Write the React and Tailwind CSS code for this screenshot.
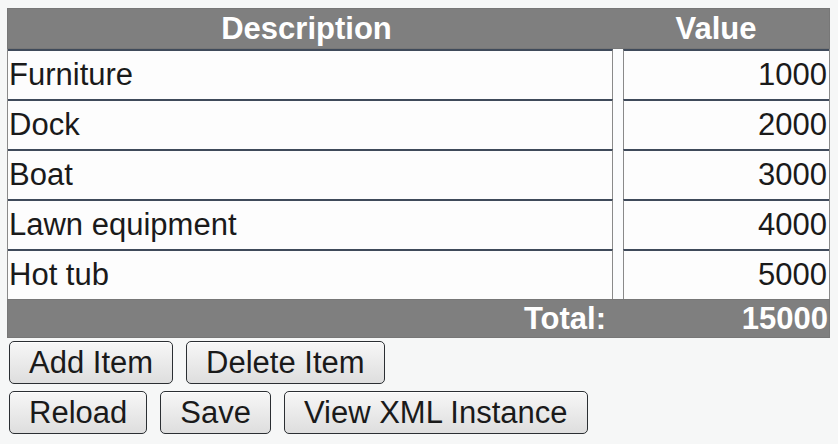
const items = [
  { description: 'Furniture', value: 1000 },
  { description: 'Dock', value: 2000 },
  { description: 'Boat', value: 3000 },
  { description: 'Lawn equipment', value: 4000 },
  { description: 'Hot tub', value: 5000 },
];

function Button({ children }) {
  return (
    <button className="h-[43px] px-[19px] rounded-[5px] border border-[#2b2f33] bg-gradient-to-b from-[#f7f7f7] to-[#dedede] text-[31px] leading-none text-[#1a1a1a] shadow-[inset_0_1px_0_#fff]">
      {children}
    </button>
  );
}

export default function App() {
  const total = items.reduce((sum, it) => sum + it.value, 0);

  return (
    <div className="w-[838px] h-[444px] bg-[#f6f7f7] pt-[8px] pl-[7px] font-['Liberation_Sans',Arial,sans-serif]">
      <div className="w-[823px]">
        {/* header */}
        <div className="flex h-[41px] bg-[#7f7f7f] border border-[#777] text-white font-bold text-[31px] leading-none">
          <div className="w-[605px] flex items-center justify-center pr-[8px]">Description</div>
          <div className="flex-1 flex items-center justify-center pr-[10px]">Value</div>
        </div>

        {/* rows */}
        <div className="bg-[#fbfcfd] border-x border-[#8a8a8a]">
          {items.map((it) => (
            <div key={it.description} className="flex h-[50px]">
              <div className="w-[605px] flex items-center pl-[1px] border-t-2 border-t-[#3f4a5a] border-r border-r-[#8a8a8a] bg-[#fdfdfd] text-[31px] text-[#1a1a1a]">
                {it.description}
              </div>
              <div className="w-[10px]" />
              <div className="flex-1 flex items-center justify-end pr-[2px] border-t-2 border-t-[#3f4a5a] border-l border-l-[#8a8a8a] bg-[#fdfdfd] text-[31px] text-[#1a1a1a]">
                {it.value}
              </div>
            </div>
          ))}
        </div>

        {/* total */}
        <div className="flex h-[39px] bg-[#7f7f7f] border border-[#777] text-white font-bold text-[31px] leading-none">
          <div className="w-[598px] flex items-center justify-end">Total:</div>
          <div className="flex-1 flex items-center justify-end pr-[1px]">{total}</div>
        </div>
      </div>

      {/* buttons */}
      <div className="flex gap-[13px] mt-[3px] pl-[2px]">
        <Button>Add Item</Button>
        <Button>Delete Item</Button>
      </div>
      <div className="flex gap-[13px] mt-[7px] pl-[2px]">
        <Button>Reload</Button>
        <Button>Save</Button>
        <Button>View XML Instance</Button>
      </div>
    </div>
  );
}
